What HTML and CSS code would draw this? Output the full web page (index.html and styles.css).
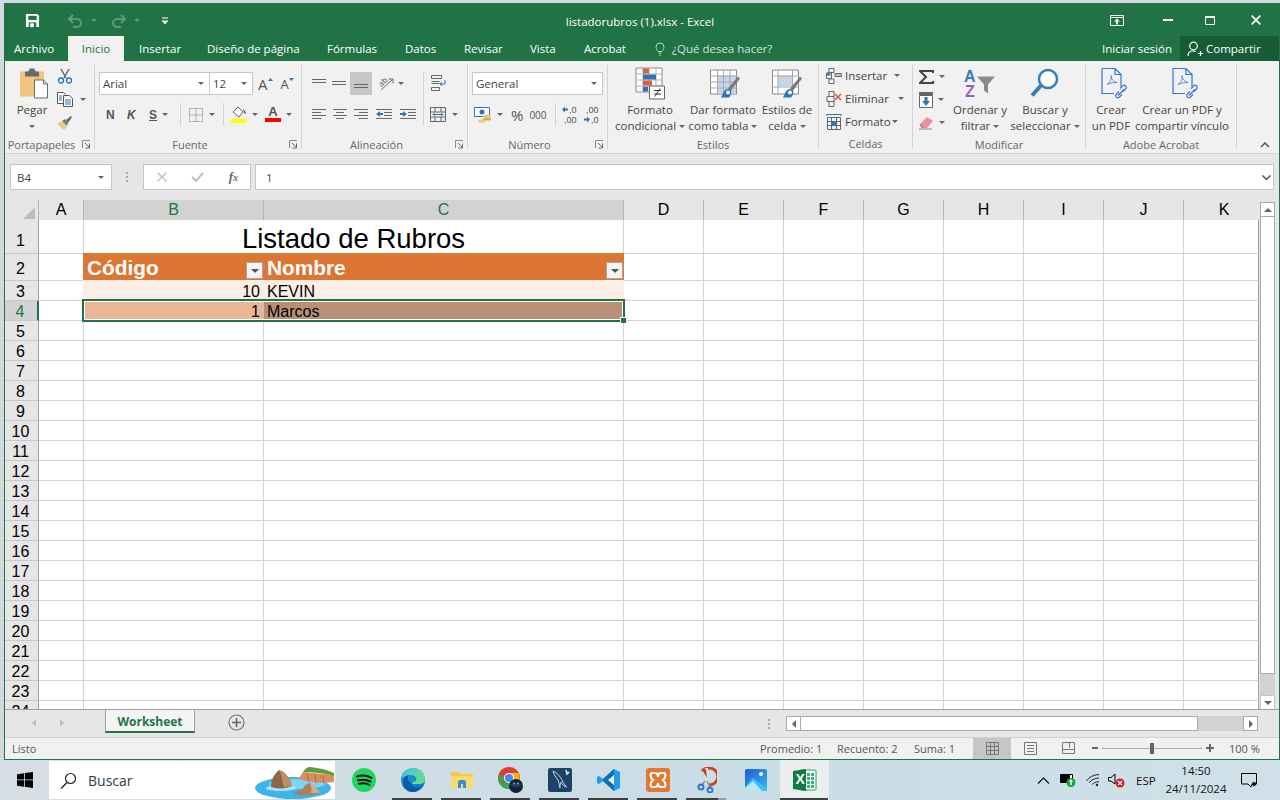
FILE: index.html
```html
<!DOCTYPE html>
<html lang="es">
<head>
    <meta charset="UTF-8">
    <title>listadorubros (1).xlsx - Excel</title>
    <link rel="stylesheet" href="styles.css">
</head>
<body>
<svg class="defs" width="0" height="0">
    <symbol id="launcher" viewBox="0 0 9 9"><path d="M.5 8V.5H8" fill="none" stroke="#8a8a8a"/><path d="M3 3l4 4M7.500 3.500v4.500H3.500" fill="none" stroke="#666"/></symbol>
</svg>
<div class="window">
    <!-- barra de titulo -->
    <header class="titlebar">
        <div class="qat">
            <svg class="save" width="15" height="15" viewBox="0 0 16 16"><path d="M1 1h12l2 2v12H1z" fill="#fff"/><path d="M3.500 3h9v4.500h-9z" fill="#217346"/><path d="M4 10h8v5H4z" fill="#217346"/><path d="M5.500 11h4v4h-4z" fill="#fff"/></svg>
            <svg class="undo" width="16" height="14" viewBox="0 0 16 14"><path d="M6 1L2 5l4 4M2 5h8a4 4 0 0 1 0 8H6" fill="none" stroke="#5f9b79" stroke-width="2"/></svg>
            <i class="caret dim"></i>
            <svg class="redo" width="16" height="14" viewBox="0 0 16 14"><path d="M10 1l4 4-4 4M14 5H6a4 4 0 0 0 0 8h4" fill="none" stroke="#5f9b79" stroke-width="2"/></svg>
            <i class="caret dim"></i>
            <svg class="customize" width="8" height="8" viewBox="0 0 8 8"><path d="M1 .5h6v1H1z M.5 3.500h7L4 7.500z" fill="#fff"/></svg>
        </div>
        <div class="doc-title">listadorubros (1).xlsx - Excel</div>
        <div class="win-buttons">
            <svg class="wb-ribbon" width="14" height="11" viewBox="0 0 14 11"><path d="M.5.500h13v10H.500z M1 2.500h12" fill="none" stroke="#fff"/><path d="M7 3.500l3 3H8v3H6v-3H4z" fill="#fff"/></svg>
            <svg class="wb-min" width="10" height="2" viewBox="0 0 10 2"><path d="M0 0h10v2H0z" fill="#fff"/></svg>
            <svg class="wb-max" width="10" height="9" viewBox="0 0 10 9"><path d="M.5 1h9v7.500h-9z" fill="none" stroke="#fff"/><path d="M0 0h10v2H0z" fill="#fff"/></svg>
            <svg class="wb-close" width="10" height="10" viewBox="0 0 10 10"><path d="M.7.700l8.600 8.600M9.300.700L.7 9.300" stroke="#fff" stroke-width="1.800"/></svg>
        </div>
    </header>

    <nav class="tabs">
        <a class="tab archivo">Archivo</a>
        <a class="tab active">Inicio</a>
        <a class="tab t-ins">Insertar</a>
        <a class="tab t-dis">Diseño de página</a>
        <a class="tab t-for">Fórmulas</a>
        <a class="tab t-dat">Datos</a>
        <a class="tab t-rev">Revisar</a>
        <a class="tab t-vis">Vista</a>
        <a class="tab t-acr">Acrobat</a>
        <svg class="bulb" width="10" height="14" viewBox="0 0 10 14"><path d="M3 9.500C2 8 1 7 1 5a4 4 0 0 1 8 0c0 2-1 3-2 4.500zM3.500 11h3M4 13h2" fill="none" stroke="#b5d0c0"/></svg>
        <span class="tell-me">¿Qué desea hacer?</span>
        <a class="signin">Iniciar sesión</a>
        <a class="share">
            <svg width="16" height="16" viewBox="0 0 16 16"><circle cx="6.500" cy="5" r="3.800" fill="none" stroke="#fff" stroke-width="1.200"/><path d="M1 15c0-3 2-5 5-5 1 0 2 .3 2.500 .7M11 12.500h5M13.500 10v5" fill="none" stroke="#fff" stroke-width="1.200"/></svg>
            Compartir
        </a>
    </nav>

    <!-- cinta -->
    <section class="ribbon">
        <div class="group g-clip">
            <div class="group-body clip-body">
                <div class="big pegar">
                    <svg width="36" height="36" viewBox="0 0 36 36"><path d="M6 6h24v25H6z" fill="#efc581"/><path d="M11 6h3l2-3h4l2 3h3v5H11z" fill="#6a6a6a"/><path d="M20.500 14.500h9l4 4v14h-13z" fill="#fff" stroke="#6a6a6a"/><path d="M29.500 14.500v4h4" fill="none" stroke="#6a6a6a"/></svg>
                    <span>Pegar</span>
                    <i class="caret"></i>
                </div>
                <div class="clip-tools">
                    <svg width="16" height="16" viewBox="0 0 16 16"><path d="M4 1l5 9M12 1L7 10" stroke="#666" stroke-width="1.500" fill="none"/><circle cx="4" cy="12.500" r="2.500" fill="none" stroke="#2f75b5" stroke-width="1.300"/><circle cx="12" cy="12.500" r="2.500" fill="none" stroke="#2f75b5" stroke-width="1.300"/></svg>
                    <div class="copy-row">
                        <svg width="16" height="15" viewBox="0 0 16 15"><path d="M.5.500h6l2 2v9H.5z" fill="#fff" stroke="#555"/><path d="M6.500 3.500h6l3 3v8h-9z" fill="#fff" stroke="#555"/><path d="M2 4h3M2 6h3M2 8h3M8 8h6M8 10h6M8 12h6" stroke="#2f75b5"/></svg>
                        <i class="caret"></i>
                    </div>
                    <svg width="16" height="16" viewBox="0 0 16 16"><path d="M0 9l5-3 5 6-3 3z" fill="#efc581"/><path d="M5 6l3-2 3 4-1 3z" fill="#7a7a7a"/><path d="M9 5l5-4 1 1-4 6z" fill="#666"/></svg>
                </div>
            </div>
            <div class="group-label"><span>Portapapeles</span><svg class="launcher"><use href="#launcher"/></svg></div>
        </div>

        <div class="group g-font">
            <div class="group-body rows2">
                <div class="tool-row">
                    <div class="combo font-name">Arial<i class="caret"></i></div>
                    <div class="combo font-size">12<i class="caret"></i></div>
                    <span class="grow-a">A<svg width="5" height="3" viewBox="0 0 5 3"><path d="M0 3l2.500-3L5 3z" fill="#2f75b5"/></svg></span>
                    <span class="shrink-a">A<svg width="5" height="3" viewBox="0 0 5 3"><path d="M0 0l2.500 3L5 0z" fill="#2f75b5"/></svg></span>
                </div>
                <div class="tool-row font-row">
                    <b class="fmt f-n">N</b>
                    <b class="fmt f-k">K</b>
                    <b class="fmt f-s">S</b>
                    <i class="caret"></i>
                    <span class="vsep"></span>
                    <svg class="borders" width="14" height="14" viewBox="0 0 14 14"><path d="M.5.500h13v13H.500zM7 .5v13M.5 7h13" fill="none" stroke="#7a7a7a" stroke-dasharray="1 1"/></svg>
                    <i class="caret"></i>
                    <span class="vsep"></span>
                    <svg class="fill-c" width="17" height="18" viewBox="0 0 17 18"><path d="M2 7l5-5 5 5-4 5z" fill="#fff" stroke="#666"/><path d="M12 4c2 1 3 3 3 5l-2-1z" fill="#2f75b5"/><path d="M0 14h16v4H0z" fill="#ffff00"/></svg>
                    <i class="caret"></i>
                    <span class="color-a">A</span>
                    <i class="caret"></i>
                </div>
            </div>
            <div class="group-label"><span>Fuente</span><svg class="launcher"><use href="#launcher"/></svg></div>
        </div>

        <div class="group g-align">
            <div class="group-body align-body">
                <div class="align-grid">
                    <div class="tool-row">
                        <svg class="al" width="14" height="9" viewBox="0 0 14 9"><path d="M0 .5h14M0 3.500h14" stroke="#666"/></svg>
                        <svg class="al al2" width="14" height="9" viewBox="0 0 14 9"><path d="M0 2.500h14M0 5.500h14" stroke="#666"/></svg>
                        <span class="al-on"><svg width="14" height="9" viewBox="0 0 14 9"><path d="M0 5.500h14M0 8.500h14" stroke="#666"/></svg></span>
                        <svg class="orient" width="18" height="17" viewBox="0 0 18 17"><text x="3" y="10" class="ab" transform="rotate(-45 7 8)">ab</text><path d="M5 15L16 5M12.500 4H17v4.500" fill="none" stroke="#666"/></svg>
                        <i class="caret"></i>
                    </div>
                    <div class="tool-row al-row">
                        <svg width="14" height="11" viewBox="0 0 14 11"><path d="M0 .5h14M0 3.500h9M0 6.500h14M0 9.500h9" stroke="#666"/></svg>
                        <svg width="14" height="11" viewBox="0 0 14 11"><path d="M0 .5h14M3 3.500h8M0 6.500h14M3 9.500h8" stroke="#666"/></svg>
                        <svg width="14" height="11" viewBox="0 0 14 11"><path d="M0 .5h14M5 3.500h9M0 6.500h14M5 9.500h9" stroke="#666"/></svg>
                        <svg class="indent" width="16" height="11" viewBox="0 0 16 11"><path d="M0 .5h16M8 3.500h8M8 6.500h8M0 9.500h16" stroke="#666"/><path d="M0 5l4-3v2h3v2H4v2z" fill="#2f75b5"/></svg>
                        <svg class="indent" width="16" height="11" viewBox="0 0 16 11"><path d="M0 .5h16M8 3.500h8M8 6.500h8M0 9.500h16" stroke="#666"/><path d="M7 5L3 2v2H0v2h3v2z" fill="#2f75b5"/></svg>
                    </div>
                </div>
                <span class="vsep tall"></span>
                <div class="wrap-col">
                    <svg width="16" height="17" viewBox="0 0 16 17"><path d="M.5.500h10v3H.5zM.5 12.500h8v3h-8zM.5 6.500h8" fill="none" stroke="#666"/><path d="M.5 8.500h8" stroke="#666"/><path d="M14 5v4h-5m2-2l-2 2 2 2" fill="none" stroke="#2f75b5"/></svg>
                    <div class="merge-row">
                        <svg width="16" height="15" viewBox="0 0 16 15"><path d="M.5.500h15v14H.500zM.5 5h15M.5 10h15M5 .5V5M11 .5V5M5 10v4.500M11 10v4.500" fill="none" stroke="#666"/><path d="M3 7.500h10" stroke="#2f75b5"/><path d="M2 7.500L5 6v3zM14 7.500L11 6v3z" fill="#2f75b5"/></svg>
                        <i class="caret"></i>
                    </div>
                </div>
            </div>
            <div class="group-label"><span>Alineación</span><svg class="launcher"><use href="#launcher"/></svg></div>
        </div>

        <div class="group g-num">
            <div class="group-body rows2">
                <div class="tool-row"><div class="combo num-format">General<i class="caret"></i></div></div>
                <div class="tool-row num-row">
                    <svg width="18" height="16" viewBox="0 0 18 16"><path d="M.5.500h15v9H.500z" fill="#fff" stroke="#2f75b5"/><circle cx="8" cy="5" r="2.500" fill="#2f75b5"/><ellipse cx="13" cy="9" rx="4" ry="1.500" fill="#efc581"/><ellipse cx="13" cy="12" rx="4" ry="1.500" fill="#e0a84e"/><ellipse cx="8" cy="14" rx="4" ry="1.500" fill="#efc581"/></svg>
                    <i class="caret"></i>
                    <span class="pct">%</span>
                    <span class="thou">000</span>
                    <span class="vsep"></span>
                    <span class="dec"><em><svg width="6" height="7" viewBox="0 0 6 7"><path d="M0 3.500L3 .5v2h3v2H3v2z" fill="#2f75b5"/></svg>,0</em><em>,00</em></span>
                    <span class="dec d2"><em>,00</em><em><svg width="6" height="7" viewBox="0 0 6 7"><path d="M6 3.500L3 .5v2H0v2h3v2z" fill="#2f75b5"/></svg>,0</em></span>
                </div>
            </div>
            <div class="group-label"><span>Número</span><svg class="launcher"><use href="#launcher"/></svg></div>
        </div>

        <div class="group g-styles">
            <div class="group-body big-row">
                <div class="big b-cond">
                    <svg width="30" height="32" viewBox="0 0 30 32"><path d="M1 .5h26v24H1z" fill="#fff" stroke="#8a8a8a"/><path d="M1 6.500h26M1 12.500h26M1 18.500h26M8 .5v24M14 .5v24M21 .5v24" stroke="#b5b5b5"/><path d="M8 1h6v5H8z" fill="#d9603a"/><path d="M8 7h13v5H8z" fill="#2f75b5"/><path d="M8 13h9v5H8z" fill="#d9603a"/><path d="M8 19h5v5H8z" fill="#2f75b5"/><path d="M14.500 18.500h15v13h-15z" fill="#fff" stroke="#666"/><path d="M19 23h7M19 26.500h7M25 21l-5 8" stroke="#333" fill="none"/></svg>
                    <span>Formato</span>
                    <span>condicional<i class="caret"></i></span>
                </div>
                <div class="big b-table">
                    <svg width="30" height="32" viewBox="0 0 30 32"><path d="M.5 2.500h26v24H.500z" fill="#fff" stroke="#8a8a8a"/><path d="M7 8h19v18H7z" fill="#c5d6e8"/><path d="M.5 8.500h26M.5 14.500h26M.5 20.500h26M7.500 2.500v24M13.500 2.500v24M20 2.500v24" stroke="#a8a8a8"/><path d="M18 21L28 9l2 2-9 12z" fill="#7a7a7a"/><path d="M11 30l3-6c2-3 5-3 7-1 1 2 0 5-2 7z" fill="#2f75b5"/><circle cx="18" cy="25" r="2" fill="#fff"/></svg>
                    <span>Dar formato</span>
                    <span>como tabla<i class="caret"></i></span>
                </div>
                <div class="big b-cell">
                    <svg width="30" height="32" viewBox="0 0 30 32"><path d="M.5 2.500h26v24H.500z" fill="#fff" stroke="#8a8a8a"/><path d="M6 8h14v11H6z" fill="#c5d6e8"/><path d="M.5 8.500h26M.5 19.500h26M6 2.500v24M20.500 2.500v24" stroke="#a8a8a8"/><path d="M18 21L28 9l2 2-9 12z" fill="#7a7a7a"/><path d="M11 30l3-6c2-3 5-3 7-1 1 2 0 5-2 7z" fill="#2f75b5"/><circle cx="18" cy="25" r="2" fill="#fff"/></svg>
                    <span>Estilos de</span>
                    <span>celda<i class="caret"></i></span>
                </div>
            </div>
            <div class="group-label"><span>Estilos</span></div>
        </div>

        <div class="group g-cells">
            <div class="group-body rows3">
                <div class="cell-tool ct-ins">
                    <svg width="16" height="16" viewBox="0 0 16 16"><path d="M3 .5h5v4H3zM3 11h5v4.500H3zM.5 5h5v5.500H.5zM5.500 5v5.500" fill="none" stroke="#666"/><path d="M9 5.500h6.500v3H9z" fill="#c8c8c8" stroke="#666"/><path d="M2 4l-2 3.500 5 0z" fill="#2f75b5"/></svg>
                    <span>Insertar</span><i class="caret"></i>
                </div>
                <div class="cell-tool ct-eli">
                    <svg width="16" height="16" viewBox="0 0 16 16"><path d="M3 .5h5v5H3zM1 5.500h7v5H1zM3 10.500h5v5H3z" fill="none" stroke="#666"/><path d="M9 3l6 6M15 3l-6 6" stroke="#e2583a" stroke-width="1.500"/></svg>
                    <span>Eliminar</span><i class="caret"></i>
                </div>
                <div class="cell-tool ct-for">
                    <svg width="16" height="16" viewBox="0 0 16 16"><path d="M1 .5h14M1 0v2M15 0v2" stroke="#2f75b5" fill="none"/><path d="M1.500 3.500h13v12h-13zM1.500 7.500h13M1.500 11.500h13M5.500 3.500v12M10.500 3.500v12" fill="none" stroke="#666"/><path d="M5 7h6v5H5z" fill="#2f75b5"/></svg>
                    <span>Formato</span><i class="caret"></i>
                </div>
            </div>
            <div class="group-label"><span>Celdas</span></div>
        </div>

        <div class="group g-edit">
            <div class="group-body edit-body">
                <div class="edit-tools">
                    <div class="edit-row"><svg width="15" height="14" viewBox="0 0 15 14"><path d="M14 3V1H1l6 6-6 6h13v-2" fill="none" stroke="#444" stroke-width="2"/></svg><i class="caret"></i></div>
                    <div class="edit-row"><svg width="14" height="16" viewBox="0 0 14 16"><path d="M.5 3.500h13v12H.500z" fill="#fff" stroke="#666"/><path d="M0 0h14v3H0z" fill="#666"/><path d="M5.500 5h3v4H11l-4 5-4-5h2.500z" fill="#2f75b5"/></svg><i class="caret"></i></div>
                    <div class="edit-row"><svg width="15" height="14" viewBox="0 0 15 14"><path d="M1 8l7-7 6 4-6 7H3z" fill="#ec8ea0"/><path d="M1 8l3 4H3zM0 13h13" stroke="#888" fill="#fff"/></svg><i class="caret"></i></div>
                </div>
                <div class="big b-sort">
                    <svg width="32" height="32" viewBox="0 0 32 32"><text x="0" y="14" class="az az-a">A</text><text x="1" y="29" class="az az-z">Z</text><path d="M13 9h18l-7 8v9l-4-3v-6z" fill="#8a8a8a"/></svg>
                    <span>Ordenar y</span>
                    <span>filtrar<i class="caret"></i></span>
                </div>
                <div class="big b-find">
                    <svg width="32" height="32" viewBox="0 0 32 32"><circle cx="19" cy="11.500" r="9" fill="#fff" stroke="#3a7cba" stroke-width="2.500"/><path d="M12 18L3 28" stroke="#3a7cba" stroke-width="4"/></svg>
                    <span>Buscar y</span>
                    <span>seleccionar<i class="caret"></i></span>
                </div>
            </div>
            <div class="group-label"><span>Modificar</span></div>
        </div>

        <div class="group g-adobe">
            <div class="group-body big-row">
                <div class="big b-pdf">
                    <svg width="28" height="32" viewBox="0 0 28 32"><path d="M1 1h13l6 6v12M14 1v6h6M1 1v25h12" fill="none" stroke="#2f75d5" stroke-width="1.200"/><path d="M6 17c3-2 5-6 4-9 0 3 2 6 6 7-3 0-6 0-10 2z" fill="none" stroke="#2f75d5" stroke-width=".800"/><path d="M19 21l3-3c2-1 4 1 3 3l-3 3M18 24l-3 3c-1 2 1 4 3 3l3-3M17 28l6-6" fill="none" stroke="#2f75d5" stroke-width="1.200"/></svg>
                    <span>Crear</span>
                    <span>un PDF</span>
                </div>
                <div class="big b-link">
                    <svg width="28" height="32" viewBox="0 0 28 32"><path d="M1 1h13l6 6v12M14 1v6h6M1 1v25h12" fill="none" stroke="#2f75d5" stroke-width="1.200"/><path d="M6 17c3-2 5-6 4-9 0 3 2 6 6 7-3 0-6 0-10 2z" fill="none" stroke="#2f75d5" stroke-width=".800"/><path d="M19 21l3-3c2-1 4 1 3 3l-3 3M18 24l-3 3c-1 2 1 4 3 3l3-3M17 28l6-6" fill="none" stroke="#2f75d5" stroke-width="1.200"/></svg>
                    <span>Crear un PDF y</span>
                    <span>compartir vínculo</span>
                </div>
            </div>
            <div class="group-label"><span>Adobe Acrobat</span></div>
        </div>
        <svg class="collapse" width="10" height="6" viewBox="0 0 10 6"><path d="M1 5l4-4 4 4" fill="none" stroke="#555" stroke-width="1.500"/></svg>
    </section>

    <!-- barra de formulas -->
    <section class="formula">
        <div class="name-box">B4<i class="caret"></i></div>
        <span class="grip"></span>
        <div class="fx-box">
            <svg width="10" height="10" viewBox="0 0 10 10"><path d="M.5.500l9 9M9.500.500l-9 9" stroke="#bdbdbd" stroke-width="1.300"/></svg>
            <svg width="13" height="10" viewBox="0 0 13 10"><path d="M1 5l4 4 7-8" fill="none" stroke="#bdbdbd" stroke-width="2"/></svg>
            <span class="fx">f<small>x</small></span>
        </div>
        <div class="formula-input">1<svg width="9" height="5" viewBox="0 0 9 5"><path d="M.5.500L4.500 4.500 8.500.500" fill="none" stroke="#444" stroke-width="1.300"/></svg></div>
    </section>

    <!-- hoja -->
    <section class="sheet">
        <div class="grid">
            <div class="col-heads">
                <div class="corner"><i></i></div>
                <div class="ch ch-a">A</div>
                <div class="ch ch-b on">B</div>
                <div class="ch ch-c on">C</div>
                <div class="ch">D</div>
                <div class="ch">E</div>
                <div class="ch">F</div>
                <div class="ch">G</div>
                <div class="ch">H</div>
                <div class="ch">I</div>
                <div class="ch">J</div>
                <div class="ch ch-k">K</div>
            </div>
            <div class="row r1"><div class="rh">1</div><div class="cell"></div><div class="cell title-cell">Listado de Rubros</div><div class="rest"></div></div>
            <div class="row r2"><div class="rh">2</div><div class="cell"></div>
                <div class="cell th th-first">Código<span class="filter"><i></i></span></div>
                <div class="cell th">Nombre<span class="filter"><i></i></span></div>
                <div class="rest"></div></div>
            <div class="row"><div class="rh">3</div><div class="cell"></div><div class="cell num band">10</div><div class="cell txt band">KEVIN</div><div class="rest"></div></div>
            <div class="row r4"><div class="rh on">4</div><div class="cell"></div><div class="cell num active-cell">1</div><div class="cell txt sel-cell">Marcos</div><div class="rest"></div>
                <div class="selection"><i></i></div></div>
            <div class="row"><div class="rh">5</div><div class="cell"></div><div class="cell"></div><div class="cell"></div><div class="rest"></div></div>
            <div class="row"><div class="rh">6</div><div class="cell"></div><div class="cell"></div><div class="cell"></div><div class="rest"></div></div>
            <div class="row"><div class="rh">7</div><div class="cell"></div><div class="cell"></div><div class="cell"></div><div class="rest"></div></div>
            <div class="row"><div class="rh">8</div><div class="cell"></div><div class="cell"></div><div class="cell"></div><div class="rest"></div></div>
            <div class="row"><div class="rh">9</div><div class="cell"></div><div class="cell"></div><div class="cell"></div><div class="rest"></div></div>
            <div class="row"><div class="rh">10</div><div class="cell"></div><div class="cell"></div><div class="cell"></div><div class="rest"></div></div>
            <div class="row"><div class="rh">11</div><div class="cell"></div><div class="cell"></div><div class="cell"></div><div class="rest"></div></div>
            <div class="row"><div class="rh">12</div><div class="cell"></div><div class="cell"></div><div class="cell"></div><div class="rest"></div></div>
            <div class="row"><div class="rh">13</div><div class="cell"></div><div class="cell"></div><div class="cell"></div><div class="rest"></div></div>
            <div class="row"><div class="rh">14</div><div class="cell"></div><div class="cell"></div><div class="cell"></div><div class="rest"></div></div>
            <div class="row"><div class="rh">15</div><div class="cell"></div><div class="cell"></div><div class="cell"></div><div class="rest"></div></div>
            <div class="row"><div class="rh">16</div><div class="cell"></div><div class="cell"></div><div class="cell"></div><div class="rest"></div></div>
            <div class="row"><div class="rh">17</div><div class="cell"></div><div class="cell"></div><div class="cell"></div><div class="rest"></div></div>
            <div class="row"><div class="rh">18</div><div class="cell"></div><div class="cell"></div><div class="cell"></div><div class="rest"></div></div>
            <div class="row"><div class="rh">19</div><div class="cell"></div><div class="cell"></div><div class="cell"></div><div class="rest"></div></div>
            <div class="row"><div class="rh">20</div><div class="cell"></div><div class="cell"></div><div class="cell"></div><div class="rest"></div></div>
            <div class="row"><div class="rh">21</div><div class="cell"></div><div class="cell"></div><div class="cell"></div><div class="rest"></div></div>
            <div class="row"><div class="rh">22</div><div class="cell"></div><div class="cell"></div><div class="cell"></div><div class="rest"></div></div>
            <div class="row"><div class="rh">23</div><div class="cell"></div><div class="cell"></div><div class="cell"></div><div class="rest"></div></div>
            <div class="row"><div class="rh">24</div><div class="cell"></div><div class="cell"></div><div class="cell"></div><div class="rest"></div></div>
        </div>
        <div class="vscroll">
            <div class="sb-btn"><i class="tri-up"></i></div>
            <div class="v-thumb"></div>
            <div class="v-track"></div>
            <div class="sb-btn"><i class="caret"></i></div>
        </div>
    </section>

    <section class="sheet-tabs">
        <i class="nav-l"></i>
        <i class="nav-r"></i>
        <div class="sheet-tab">Worksheet</div>
        <svg class="add-sheet" width="17" height="17" viewBox="0 0 17 17"><circle cx="8.500" cy="8.500" r="7.500" fill="none" stroke="#777" stroke-width="1.200"/><path d="M4 8.500h9M8.500 4v9" stroke="#666" stroke-width="1.600"/></svg>
        <span class="grip"></span>
        <div class="hscroll">
            <div class="hs-btn"><i class="nav-l dark"></i></div>
            <div class="h-thumb"></div>
            <div class="h-track"></div>
            <div class="hs-btn"><i class="nav-r dark"></i></div>
        </div>
    </section>

    <footer class="status">
        <span class="ready">Listo</span>
        <span class="stat s-avg">Promedio: 1</span>
        <span class="stat s-count">Recuento: 2</span>
        <span class="stat s-sum">Suma: 1</span>
        <span class="view on"><svg width="13" height="13" viewBox="0 0 13 13"><path d="M.5.500h12v12H.500zM4.500.5v12M8.500.5v12M.5 4.500h12M.5 8.500h12" fill="none" stroke="#777"/></svg></span>
        <span class="view"><svg width="13" height="13" viewBox="0 0 13 13"><path d="M.5.500h12v12H.500z" fill="none" stroke="#777"/><path d="M3 3.500h7M3 6.500h7M3 9.500h7" stroke="#777"/></svg></span>
        <span class="view"><svg width="13" height="12" viewBox="0 0 13 12"><path d="M.5.500h12v11H.500zM7.500.5v5M.5 7.500h12" fill="none" stroke="#777"/></svg></span>
        <span class="zoom-minus"></span>
        <span class="slider"><i></i></span>
        <span class="zoom-plus"></span>
        <span class="zoom-pct">100 %</span>
    </footer>
</div>

<!-- barra de tareas -->
<div class="taskbar">
    <div class="start">
        <svg width="16" height="16" viewBox="0 0 16 16"><path d="M0 2.300L7 1.200V7.500H0zM7.800 1.100L16 0v7.500H7.800zM0 8.300h7v6.400L0 13.700zM7.800 8.300H16V16L7.800 14.800z" fill="#000"/></svg>
    </div>
    <div class="search">
        <svg width="17" height="17" viewBox="0 0 17 17"><circle cx="10.500" cy="6.500" r="5" fill="none" stroke="#222" stroke-width="1.200"/><path d="M7 10.500L1 16.500" stroke="#222" stroke-width="1.300"/></svg>
        <span>Buscar</span>
        <svg class="island" width="80" height="33" viewBox="0 0 80 33">
            <ellipse cx="38" cy="21" rx="38" ry="11" fill="#3fb4e8"/>
            <ellipse cx="42" cy="17" rx="28" ry="5" fill="#7fd4f4"/>
            <ellipse cx="26" cy="21" rx="15" ry="3" fill="#a8e4f8"/>
            <path d="M16 20c0-6 2-12 8-17 7 2 11 9 13 16-6 3-15 3-21 1z" fill="#8f6546"/>
            <path d="M24 3c3 4 3 11 5 17 3 0 6-1 8-1-2-7-6-14-13-16z" fill="#bd9069"/>
            <path d="M44 12c1-3 3-5 4-7l31 3v7c-11 2-24 0-35-3z" fill="#d98f5c"/>
            <path d="M52 7l2 8M60 8l1 8M68 9l1 7" stroke="#b5683a" fill="none"/>
            <path d="M48 5c2-3 4-5 7-5 9 1 18 3 24 6v3C69 6 58 5 48 5z" fill="#5d9e3c"/>
            <path d="M39 27c1-3 5-4 8-4 2-4 5-7 8-7 3 2 6 6 10 10-8 3-18 3-26 1z" fill="#ad7f58"/>
            <path d="M55 16c1 4 2 7 1 10 3 0 6 0 9 0-3-4-6-8-10-10z" fill="#d4ac84"/>
        </svg>
    </div>
    <div class="task"><svg width="24" height="24" viewBox="0 0 24 24"><circle cx="12" cy="12" r="12" fill="#1ed760"/><path d="M5 8.500c5-1.500 10-1 14.500 1.300M6 12.300c4.500-1.200 8.500-.8 12.500 1.200M7 15.800c4-1 7.500-.6 10.500 1" fill="none" stroke="#111" stroke-width="2" stroke-linecap="round"/></svg></div>
    <div class="task open"><svg width="24" height="24" viewBox="0 0 24 24"><defs><linearGradient id="edgeA" x1="0" y1="0" x2="1" y2="1"><stop offset="0" stop-color="#2a9fe0"/><stop offset="1" stop-color="#0f6cbd"/></linearGradient><linearGradient id="edgeB" x1="0" y1="0" x2="1" y2="1"><stop offset="0" stop-color="#3ccbe0"/><stop offset="1" stop-color="#6fe07a"/></linearGradient></defs><circle cx="12" cy="12" r="12" fill="url(#edgeA)"/><path d="M1 9C3 3 8 0 12 0c7 0 12 5 12 11 0 3-2 5-6 5h-7c0-2 2-3 4-3 1-3-1-6-5-6-4 0-7 1-9 2z" fill="url(#edgeB)"/><path d="M11 16c0 3 4 5 9 3-2 3-5 5-8 5-6 0-10-5-10-10 0-3 2-6 6-7-2 2-2 4-1 5 1 2 3 3 4 4z" fill="#0c59a4"/></svg></div>
    <div class="task open"><svg width="22" height="20" viewBox="0 0 22 20"><path d="M0 2h8l2 2h12v14H0z" fill="#f7c948"/><path d="M0 6h22v12H0z" fill="#fbd96b"/><path d="M7 18v-6c0-1 1-2 2-2h4c1 0 2 1 2 2v6h-3v-4h-2v4z" fill="#2f8fd8"/></svg></div>
    <div class="task open"><svg width="26" height="26" viewBox="0 0 26 26"><circle cx="11" cy="11" r="11" fill="#e33b2e"/><path d="M11 11L1.500 16.500A11 11 0 0 1 1 8z" fill="#34a853"/><path d="M1.500 16a11 11 0 0 0 11 6l4-8z" fill="#34a853"/><path d="M11 6h9.500a11 11 0 0 1-4 14z" fill="#fbbc05"/><circle cx="11" cy="11" r="5" fill="#fff"/><circle cx="11" cy="11" r="4" fill="#4285f4"/><circle cx="18" cy="19" r="7" fill="#123"/><path d="M12 18c3-3 9-3 12 0-2 3-10 3-12 0z" fill="#1d3b5c"/><circle cx="16" cy="16.500" r="1" fill="#4fb8e0"/><circle cx="20" cy="16.500" r="1" fill="#4fb8e0"/></svg></div>
    <div class="task open"><svg width="24" height="24" viewBox="0 0 24 24"><rect width="24" height="24" rx="2" fill="#1d4468"/><path d="M5 3c4 2 7 5 9 9 1 3 3 5 5 7-3-1-5-2-6-5-1 2-1 4-1 6-1-3-1-6-2-8-2-3-4-5-5-9z" fill="none" stroke="#c7d5e0"/><path d="M18 2l1 4 2-2" fill="none" stroke="#e8eef3" stroke-width="1.500"/></svg></div>
    <div class="task open"><svg width="24" height="24" viewBox="0 0 24 24"><path d="M17 1l6 3v16l-6 3L6 13 2 16l-2-1V9l2-1 4 3z" fill="#1f9cf0"/><path d="M17 1v22L6 13V11z" fill="#0b6fb8"/><path d="M17 7l-6 5 6 5z" fill="#eef2f5"/></svg></div>
    <div class="task open"><svg width="24" height="24" viewBox="0 0 24 24"><rect width="24" height="24" rx="3" fill="#e8762c"/><path d="M6 5h3c2 0 3 2 3 4 0-2 1-4 3-4h3c2 0 2 5-1 7 3 2 3 7 1 7h-3c-2 0-3-2-3-4 0 2-1 4-3 4H6c-2 0-2-5 1-7-3-2-3-7-1-7z" fill="none" stroke="#fff" stroke-width="2.200"/></svg></div>
    <div class="task open half"><svg width="20" height="26" viewBox="0 0 20 26"><path d="M5 4a9 8.500 0 1 1 7 14" fill="none" stroke="#c9481f" stroke-width="3"/><path d="M8 1h3v12H8z" fill="#e0e0e0"/><path d="M6 4l3-2 1 9z" fill="#c9381f"/><path d="M8 14l-3 4M10 14l3 6" stroke="#888" stroke-width="1.300"/><circle cx="4" cy="20" r="2.500" fill="none" stroke="#2f75d5" stroke-width="2"/><circle cx="13" cy="23" r="2.500" fill="none" stroke="#2f75d5" stroke-width="2"/></svg></div>
    <div class="task"><svg width="22" height="22" viewBox="0 0 22 22"><defs><linearGradient id="photoA" x1="0" y1="0" x2="1" y2="1"><stop offset="0" stop-color="#1b62d6"/><stop offset="1" stop-color="#38b6f0"/></linearGradient></defs><rect width="22" height="22" rx="2" fill="url(#photoA)"/><circle cx="16" cy="5" r="2" fill="#fff"/><path d="M0 18l8-9 14 11v2H0z" fill="#3fc0f5"/><path d="M0 22v-3l8-7 9 10z" fill="#b6e8fb"/></svg></div>
    <div class="task excel-task open"><svg width="24" height="24" viewBox="0 0 24 24"><path d="M8 2h14a1 1 0 0 1 1 1v18a1 1 0 0 1-1 1H8z" fill="#fff" stroke="#21a366"/><path d="M14 5h3v3h-3zM18 5h3v3h-3zM14 9h3v3h-3zM18 9h3v3h-3zM14 13h3v3h-3zM18 13h3v3h-3zM14 17h3v3h-3zM18 17h3v3h-3z" fill="#33b377"/><path d="M0 3l13-2v22L0 21z" fill="#107c41"/><text x="2.500" y="16" class="xl">X</text></svg></div>
    <div class="tray">
        <svg class="tr-up" width="13" height="7" viewBox="0 0 13 7"><path d="M1 6.500L6.500 1 12 6.500" fill="none" stroke="#111" stroke-width="1.200"/></svg>
        <svg class="tr-bat" width="16" height="14" viewBox="0 0 16 14"><path d="M.5 1.500h12v8H.5z" fill="#fff" stroke="#000"/><path d="M1 2h9v7H1z" fill="#000"/><circle cx="11" cy="9.500" r="4.500" fill="#16a13a"/><path d="M11 6l2 3h-1.300v3h-1.400V9H9z" fill="#fff"/></svg>
        <svg class="tr-wifi" width="14" height="14" viewBox="0 0 14 14"><path d="M.5 8C3 4 7 2 13 1.500M3 10c2-3 5-4.500 10-5M6 11.500c1.500-1.500 3-2.500 7-2.800" fill="none" stroke="#222"/><circle cx="11" cy="12" r="1.200" fill="#222"/></svg>
        <svg class="tr-vol" width="18" height="15" viewBox="0 0 18 15"><path d="M.5 4.500h2.500L7 1v10L3 8H.5z" fill="none" stroke="#000"/><circle cx="12" cy="10" r="4.500" fill="#e81123"/><path d="M10 8l4 4M14 8l-4 4" stroke="#fff" stroke-width="1.200"/></svg>
        <span class="lang">ESP</span>
        <div class="clock"><span>14:50</span><span>24/11/2024</span></div>
        <svg class="tr-note" width="16" height="15" viewBox="0 0 16 15"><path d="M.5.500h15v10.500H11l-1 3-3-3H.5z" fill="none" stroke="#000"/><circle cx="13" cy="11" r="2" fill="#000"/></svg>
    </div>
</div>
</body>
</html>
```

FILE: styles.css
```css
* {
    box-sizing: border-box;
}
html, body {
    margin: 0;
    height: 800px;
    overflow: hidden;
}
body {
    background-color: #d3d9de;
    font-family: "Open Sans", "Noto Sans", sans-serif;
    font-size: 11.5px;
    color: #444;
}
.defs {
    position: absolute;
}
svg {
    display: block;
    flex: none;
}
.window {
    width: 1276px;
    height: 757px;
    margin: 3px 0 0 4px;
    border: 1px solid #217346;
    border-width: 0 1px 1px 1px;
    background-color: #f1f1f1;
    display: flex;
    flex-direction: column;
}
.caret {
    display: inline-block;
    flex: none;
    width: 0;
    height: 0;
    border: 3px solid transparent;
    border-top: 3px solid #666;
    border-bottom: 0;
}
.caret.dim {
    border-top-color: #5f9b79;
}

/* titlebar */
.titlebar {
    height: 33px;
    background-color: #217346;
    display: flex;
    align-items: center;
    color: #fff;
    flex: none;
}
.qat {
    width: 470px;
    display: flex;
    align-items: center;
    padding-top: 2px;
}
.save { margin-left: 20px; }
.undo { margin-left: 27px; }
.qat .undo + .caret { margin-left: 8px; }
.redo { margin-left: 14px; }
.qat .redo + .caret { margin-left: 7px; }
.customize { margin-left: 21px; }
.doc-title {
    width: 330px;
    text-align: center;
    padding-top: 4px;
    font-size: 11.5px;
}
.win-buttons {
    flex: 1;
    display: flex;
    align-items: center;
    padding-top: 1px;
}
.wb-ribbon { margin-left: 305px; }
.wb-min { margin-left: 39px; }
.wb-max { margin-left: 32px; }
.wb-close { margin-left: 36px; }

/* tabs */
.tabs {
    height: 25px;
    flex: none;
    background-color: #217346;
    color: #fff;
    display: flex;
    align-items: center;
    font-size: 11.5px;
}
.tab {
    line-height: 25px;
}
.archivo { margin-left: 9px; width: 54px; }
.tab.active {
    width: 56px;
    text-align: center;
    background-color: #f1f1f1;
    color: #217346;
}
.t-ins { margin-left: 15px; width: 68px; }
.t-dis { width: 120px; }
.t-for { width: 78px; }
.t-dat { width: 59px; }
.t-rev { width: 66px; }
.t-vis { width: 54px; }
.t-acr { width: 71px; }
.bulb { margin-right: 7px; }
.tell-me {
    color: #d3e3da;
    width: 430px;
}
.signin { width: 78px; }
.share {
    width: 99px;
    height: 25px;
    background-color: #185c37;
    display: flex;
    align-items: center;
    gap: 3px;
    padding-left: 7px;
}

/* ribbon */
.ribbon {
    height: 93px;
    flex: none;
    display: flex;
    background-color: #f1f1f1;
    border-bottom: 1px solid #d2d2d2;
    position: relative;
}
.group {
    height: 84px;
    margin-top: 4px;
    border-right: 1px solid #d2d2d2;
    display: flex;
    flex-direction: column;
    flex: none;
}
.group-body {
    height: 75px;
    flex: none;
    display: flex;
}
.group-label {
    display: flex;
    align-items: center;
    height: 9px;
    color: #666;
    font-size: 11px;
}
.group-label span {
    flex: 1;
    text-align: center;
}
.launcher {
    width: 9px;
    height: 9px;
    margin: 0 3px 0 4px;
}
.g-clip { width: 90px; }
.g-font { width: 207px; }
.g-align { width: 166px; }
.g-num { width: 140px; }
.g-styles { width: 211px; }
.g-cells { width: 94px; }
.g-edit { width: 173px; }
.g-adobe { width: 151px; }
.collapse {
    position: absolute;
    right: 9px;
    bottom: 5px;
}
.big {
    display: flex;
    flex-direction: column;
    align-items: center;
    line-height: 16px;
    white-space: nowrap;
}
.big span {
    display: flex;
    align-items: center;
    gap: 3px;
}
.big > svg {
    height: 37px;
}

/* portapapeles */
.clip-body {
    padding-left: 9px;
}
.pegar {
    width: 36px;
}
.pegar > i {
    margin-top: 7px;
}
.clip-tools {
    margin-left: 7px;
    padding-top: 3px;
    display: flex;
    flex-direction: column;
    gap: 8px;
}
.copy-row {
    display: flex;
    align-items: center;
    gap: 7px;
}

/* fuente */
.rows2 {
    flex-direction: column;
    padding: 7px 0 0 4px;
    gap: 8px;
}
.tool-row {
    display: flex;
    align-items: center;
    height: 23px;
}
.combo {
    height: 23px;
    background-color: #fff;
    border: 1px solid #c6c6c6;
    display: flex;
    align-items: center;
    justify-content: space-between;
    padding: 0 5px 0 3px;
}
.font-name { width: 111px; }
.font-size { width: 44px; margin-left: -1px; }
.grow-a, .shrink-a {
    display: flex;
    color: #555;
    font-size: 15px;
    line-height: 20px;
}
.grow-a { margin-left: 5px; }
.shrink-a { margin-left: 8px; font-size: 13px; }
.grow-a svg, .shrink-a svg { margin-top: 4px; }
.font-row {
    padding-left: 7px;
}
.fmt {
    font-family: "Liberation Sans", sans-serif;
    font-size: 12px;
    color: #555;
    width: 10px;
}
.f-k { margin-left: 11px; font-style: italic; }
.f-s { margin-left: 12px; text-decoration: underline; }
.font-row .f-s + .caret { margin-left: 3px; }
.vsep {
    width: 1px;
    height: 23px;
    background-color: #d2d2d2;
    flex: none;
}
.font-row .f-s + .caret + .vsep { margin-left: 12px; }
.borders { margin-left: 8px; }
.borders + .caret { margin-left: 6px; }
.borders + .caret + .vsep { margin-left: 8px; }
.fill-c { margin: -2px 0 0 7px; }
.fill-c + .caret { margin-left: 4px; }
.color-a {
    width: 16px;
    margin: -2px 0 0 7px;
    text-align: center;
    font-family: "Liberation Sans", sans-serif;
    font-weight: bold;
    font-size: 13px;
    line-height: 13px;
    color: #555;
    border-bottom: 4px solid #f00;
}
.color-a + .caret { margin-left: 5px; }

/* alineacion */
.align-body {
    padding-left: 10px;
    padding-top: 7px;
}
.align-grid {
    display: flex;
    flex-direction: column;
    gap: 8px;
    width: 111px;
}
.al2 { margin-left: 6px; }
.al-on {
    width: 22px;
    height: 23px;
    margin-left: 4px;
    background-color: #c6c6c6;
    display: flex;
    align-items: center;
    justify-content: center;
}
.orient { margin-left: 4px; }
.orient + .caret { margin-left: 4px; }
.ab {
    font-size: 8px;
    fill: #555;
}
.al-row {
    gap: 7px;
}
.al-row .indent { margin-left: 1px; }
.vsep.tall {
    height: 54px;
}
.wrap-col {
    margin-left: 6px;
    padding-top: 3px;
    display: flex;
    flex-direction: column;
    gap: 15px;
}
.wrap-col > svg { margin-left: 1px; }
.merge-row {
    display: flex;
    align-items: center;
    gap: 6px;
}

/* numero */
.num-format { width: 131px; }
.num-row {
    padding-left: 2px;
}
.num-row .caret { margin-left: 5px; }
.pct {
    margin-left: 8px;
    font-size: 15px;
    color: #555;
}
.thou {
    margin-left: 6px;
    font-size: 10px;
    color: #555;
}
.num-row .vsep { margin-left: 8px; }
.dec {
    width: 17px;
    height: 20px;
    margin-left: 4px;
    display: block;
    font-family: "Liberation Sans", sans-serif;
    font-size: 9px;
    line-height: 10px;
    color: #555;
    text-align: right;
}
.dec em {
    font-style: normal;
    display: flex;
    align-items: center;
    justify-content: flex-end;
}
.dec svg {
    margin-right: 1px;
}
.dec.d2 { margin-left: 5px; }

/* estilos */
.b-cond { width: 70px; margin-left: 7px; }
.b-table { width: 76px; }
.b-table > svg { margin-left: 3px; }
.b-cell { width: 52px; }

/* celdas */
.rows3 {
    flex-direction: column;
    padding-left: 7px;
    margin-top: -1px;
}
.cell-tool {
    height: 23px;
    display: flex;
    align-items: center;
    gap: 3px;
}
.cell-tool span { width: 44px; }
.ct-ins .caret { margin-left: 2px; }
.ct-eli .caret { margin-left: 6px; }
.ct-for .caret { margin-left: 0; }

/* modificar */
.edit-body {
    padding-left: 6px;
}
.edit-tools {
    width: 36px;
}
.edit-row {
    height: 23px;
    display: flex;
    align-items: center;
    gap: 5px;
}
.b-sort { width: 50px; }
.b-find { width: 80px; }
.az {
    font-family: "Liberation Sans", sans-serif;
    font-size: 16px;
    font-weight: bold;
}
.az-a { fill: #3a7cba; }
.az-z { fill: #9a5fb8; }

/* adobe */
.b-pdf { width: 46px; margin-left: 2px; }
.b-link { width: 96px; }
.g-adobe .big > svg { margin-left: 8px; }

/* formula */
.formula {
    height: 46px;
    flex: none;
    background-color: #e6e6e6;
    display: flex;
    align-items: center;
    padding: 0 5px 0 5px;
    font-size: 11.5px;
}
.name-box {
    width: 102px;
    height: 26px;
    background-color: #fff;
    border: 1px solid #c6c6c6;
    display: flex;
    align-items: center;
    justify-content: space-between;
    padding: 0 7px 0 6px;
}
.grip {
    width: 2px;
    height: 11px;
    margin: 0 15px 0 14px;
    background-image: repeating-linear-gradient(#aaa 0 2px, transparent 2px 4px);
}
.fx-box {
    width: 108px;
    height: 26px;
    background-color: #fff;
    border: 1px solid #c6c6c6;
    display: flex;
    align-items: center;
    justify-content: space-between;
    padding: 0 12px 0 13px;
}
.fx {
    font-family: "Liberation Serif", serif;
    font-style: italic;
    font-weight: bold;
    font-size: 13px;
    color: #666;
}
.fx small { font-size: 10px; }
.formula-input {
    flex: 1;
    height: 26px;
    margin-left: 4px;
    background-color: #fff;
    border: 1px solid #c6c6c6;
    display: flex;
    align-items: center;
    justify-content: space-between;
    padding: 0 2px 0 10px;
}

/* hoja */
.sheet {
    height: 509px;
    flex: none;
    display: flex;
    background-color: #e6e6e6;
    overflow: hidden;
}
.grid {
    width: 1254px;
    flex: none;
    font-family: "Liberation Sans", sans-serif;
    font-size: 16px;
    color: #000;
    overflow: hidden;
}
.col-heads {
    display: grid;
    grid-template-columns: 34px 45px 180px 360px repeat(7, 80px) 75px;
    height: 20px;
}
.corner {
    background-color: #e6e6e6;
    border-right: 1px solid #b5b5b5;
    border-bottom: 1px solid #9f9f9f;
    position: relative;
}
.corner i {
    position: absolute;
    right: 3px;
    bottom: 2px;
    width: 0;
    height: 0;
    border: 6px solid #bdbdbd;
    border-top-color: transparent;
    border-left-color: transparent;
}
.ch {
    text-align: center;
    line-height: 20px;
    background-color: #e6e6e6;
    border-right: 1px solid #b5b5b5;
    border-bottom: 1px solid #9f9f9f;
}
.ch-k { border-right: 0; padding-left: 5px; }
.ch.on {
    background-color: #d2d2d2;
    color: #217346;
    border-bottom: 2px solid #217346;
}
.row {
    display: grid;
    grid-template-columns: 34px 45px 180px 360px 1fr;
    grid-template-rows: minmax(0, 1fr);
    height: 20px;
    background-color: #fff;
    position: relative;
}
.r1 { height: 34px; }
.r2 { height: 27px; }
.r4 { z-index: 1; }
.rh {
    background-color: #e6e6e6;
    border-right: 1px solid #9f9f9f;
    border-bottom: 1px solid #c8c8c8;
    text-align: center;
    line-height: 22px;
    padding-right: 2px;
}
.r1 .rh { line-height: 42px; }
.r2 .rh { line-height: 30px; }
.rh.on {
    background-color: #d2d2d2;
    color: #217346;
    border-right: 2px solid #217346;
}
.cell {
    border-right: 1px solid #d4d4d4;
    border-bottom: 1px solid #d4d4d4;
    line-height: 22px;
    white-space: nowrap;
}
.rest {
    border-bottom: 1px solid #d4d4d4;
    border-right: 1px solid #9f9f9f;
    background-image: repeating-linear-gradient(90deg, transparent 0 79px, #d4d4d4 79px 80px);
}
.title-cell {
    grid-column: span 2;
    text-align: center;
    font-size: 27.500px;
    line-height: 37px;
}
.th {
    background-color: #dc7632;
    border: 0;
    margin: -1px 0 1px 0;
    color: #fff;
    font-weight: bold;
    font-size: 20.800px;
    line-height: 30px;
    padding: 0 1px 0 3px;
    display: flex;
    justify-content: space-between;
}
.th-first {
    margin-left: -1px;
    padding-left: 4px;
}
.filter {
    width: 17px;
    height: 17px;
    margin-top: 9px;
    background-color: #f5f5f5;
    border: 1px solid #a8a8a8;
    display: flex;
    align-items: center;
    justify-content: center;
}
.filter i {
    width: 0;
    height: 0;
    border: 4px solid transparent;
    border-top: 4px solid #555;
    border-bottom: 0;
}
.num {
    text-align: right;
    padding-right: 4px;
}
.txt {
    padding-left: 3px;
}
.band {
    background-color: #fbeee6;
    border: 0;
    margin: -1px 0 1px 0;
    line-height: 24px;
}
.num.band {
    margin-left: -1px;
}
.active-cell {
    background-color: #ebb697;
    border-right: 0;
}
.sel-cell {
    background-color: #b89075;
    border-right: 0;
}
.selection {
    position: absolute;
    left: 77px;
    top: -2px;
    width: 543px;
    height: 23px;
    border: 2px solid #217346;
    box-shadow: inset 0 0 0 1px #fff;
}
.selection i {
    position: absolute;
    right: -3px;
    bottom: -3px;
    width: 5px;
    height: 5px;
    background-color: #217346;
    box-shadow: -1px -1px 0 #fff;
    box-sizing: content-box;
}
.vscroll {
    flex: 1;
    display: flex;
    flex-direction: column;
    align-items: center;
    padding: 2px 3px 0 0;
}
.sb-btn {
    width: 15px;
    height: 15px;
    background-color: #fff;
    border: 1px solid #aaa;
    display: flex;
    align-items: center;
    justify-content: center;
    flex: none;
}
.vscroll .sb-btn:last-child {
    border-color: #c6c6c6;
}
.sb-btn .caret {
    border-width: 4px;
    border-bottom: 0;
}
.tri-up {
    width: 0;
    height: 0;
    border: 4px solid transparent;
    border-bottom: 4px solid #666;
    border-top: 0;
}
.v-thumb {
    width: 15px;
    height: 457px;
    background-color: #fff;
    border: 1px solid #aaa;
    border-top: 0;
    flex: none;
}
.v-track {
    width: 15px;
    height: 21px;
    background-color: #d2d2d2;
    flex: none;
}

/* pestanas de hoja */
.sheet-tabs {
    height: 28px;
    flex: none;
    background-color: #e6e6e6;
    border-top: 1px solid #9f9f9f;
    display: flex;
    align-items: flex-start;
}
.nav-l, .nav-r {
    flex: none;
    width: 0;
    height: 0;
    border: 4px solid transparent;
    margin-top: 9px;
}
.nav-l {
    border-right: 4px solid #c0c0c0;
    border-left: 0;
    margin-left: 27px;
}
.nav-r {
    border-left: 4px solid #c0c0c0;
    border-right: 0;
    margin-left: 24px;
}
.sheet-tab {
    width: 90px;
    height: 24px;
    margin-left: 41px;
    margin-top: -1px;
    background-color: #f5f5f5;
    border: 1px solid #9f9f9f;
    border-bottom: 2px solid #217346;
    color: #217346;
    font-weight: bold;
    font-size: 12px;
    text-align: center;
    line-height: 24px;
}
.add-sheet {
    margin: 4px 0 0 33px;
}
.sheet-tabs .grip {
    margin: 9px 16px 0 523px;
}
.hscroll {
    display: flex;
    height: 15px;
    margin-top: 6px;
}
.hs-btn {
    width: 15px;
    height: 15px;
    background-color: #fff;
    border: 1px solid #aaa;
    display: flex;
    align-items: center;
    justify-content: center;
}
.hs-btn .nav-l, .hs-btn .nav-r {
    margin: 0;
}
.nav-l.dark { border-right-color: #666; }
.nav-r.dark { border-left-color: #666; }
.h-thumb {
    width: 397px;
    background-color: #fff;
    border: 1px solid #aaa;
    border-left: 0;
}
.h-track {
    width: 45px;
    background-color: #d2d2d2;
}

/* estado */
.status {
    height: 22px;
    flex: none;
    background-color: #f1f1f1;
    border-top: 1px solid #d2d2d2;
    display: flex;
    align-items: center;
    font-size: 11px;
    color: #555;
    padding-bottom: 1px;
}
.ready { width: 755px; padding-left: 7px; }
.s-avg { width: 77px; }
.s-count { width: 77px; }
.s-sum { width: 59px; }
.view {
    width: 38px;
    height: 21px;
    display: flex;
    align-items: center;
    justify-content: center;
}
.view.on { background-color: #c6c6c6; }
.zoom-minus, .zoom-plus {
    background-color: #666;
    height: 2px;
    width: 6px;
    position: relative;
}
.zoom-minus { margin-left: 5px; }
.zoom-plus { width: 8px; margin-left: 4px; }
.zoom-plus::after {
    content: "";
    position: absolute;
    left: 3px;
    top: -3px;
    width: 2px;
    height: 8px;
    background-color: #666;
}
.slider {
    width: 100px;
    height: 1px;
    margin-left: 4px;
    background-color: #aaa;
    position: relative;
}
.slider i {
    position: absolute;
    left: 48px;
    top: -5px;
    width: 4px;
    height: 11px;
    background-color: #666;
}
.zoom-pct {
    margin-left: 15px;
}

/* barra de tareas */
.taskbar {
    height: 40px;
    background: linear-gradient(90deg, #d6dde3, #c9dde7 60%, #cfe0e8);
    display: flex;
    color: #111;
    font-size: 12px;
}
.start {
    width: 49px;
    display: flex;
    align-items: center;
    justify-content: center;
}
.search {
    width: 286px;
    height: 38px;
    margin: 1px 4px 0 0;
    background-color: #fff;
    display: flex;
    align-items: center;
    padding-left: 11px;
    font-size: 14px;
    color: #2a3a4a;
}
.search span { margin-left: 11px; flex: 1; }
.island { margin-top: 6px; }
.task {
    width: 49px;
    height: 40px;
    display: flex;
    align-items: center;
    justify-content: center;
    position: relative;
    flex: none;
}
.task.open::after {
    content: "";
    position: absolute;
    left: 4px;
    bottom: 0;
    width: 40px;
    height: 2px;
    background-color: #404040;
}
.task.half::after {
    background: linear-gradient(90deg, #404040 80%, #999 80%);
}
.task.excel-task {
    background-color: #e9eef1;
}
.task.excel-task::after {
    left: 0;
    width: 48px;
}
.xl {
    font-family: "Liberation Sans", sans-serif;
    font-size: 14px;
    font-weight: bold;
    fill: #fff;
}
.tray {
    flex: 1;
    display: flex;
    align-items: center;
}
.tr-up { margin-left: 208px; }
.tr-bat { margin-left: 10px; }
.tr-wifi { margin-left: 10px; }
.tr-vol { margin-left: 8px; }
.lang { margin-left: 10px; width: 24px; font-size: 11.5px; }
.clock {
    margin-left: 5px;
    width: 62px;
    display: flex;
    flex-direction: column;
    align-items: center;
    line-height: 18px;
    font-size: 11.5px;
}
.tr-note { margin-left: 14px; }
```
